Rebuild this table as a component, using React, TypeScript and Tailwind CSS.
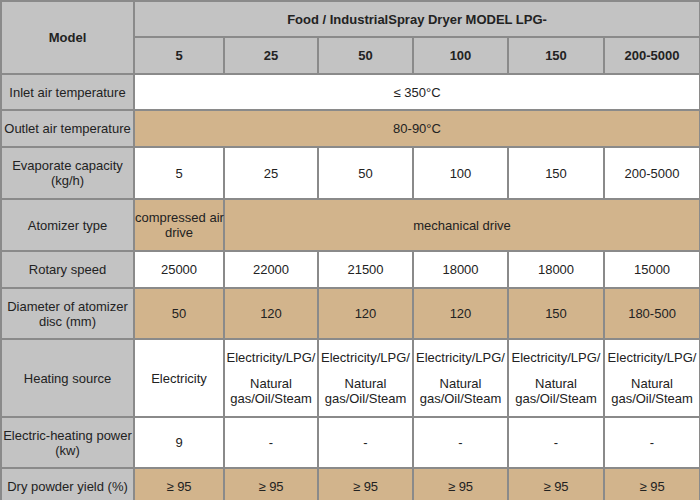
const sizes = ['5', '25', '50', '100', '150', '200-5000'];

type Row = {
  label: React.ReactNode;
  tan: boolean;
  h: string;
  cells: React.ReactNode[];
  span?: boolean;
};

const heat = (
  <div className="leading-[15px]">
    <div>Electricity/LPG/</div>
    <div className="h-[11px]" />
    <div>Natural</div>
    <div>gas/Oil/Steam</div>
  </div>
);

const rows: Row[] = [
  { label: 'Inlet air temperature', tan: false, h: 'h-[36px]', cells: ['≤ 350°C'], span: true },
  { label: 'Outlet air temperature', tan: true, h: 'h-[37px]', cells: ['80-90°C'], span: true },
  {
    label: (
      <>
        Evaporate capacity
        <br />
        (kg/h)
      </>
    ),
    tan: false,
    h: 'h-[52px]',
    cells: sizes
  },
  { label: 'Rotary speed', tan: false, h: 'h-[37px]', cells: ['25000', '22000', '21500', '18000', '18000', '15000'] },
  {
    label: (
      <>
        Diameter of atomizer
        <br />
        disc (mm)
      </>
    ),
    tan: true,
    h: 'h-[51px]',
    cells: ['50', '120', '120', '120', '150', '180-500']
  },
  { label: 'Heating source', tan: false, h: 'h-[78px]', cells: ['Electricity', heat, heat, heat, heat, heat] },
  {
    label: (
      <>
        Electric-heating power
        <br />
        (kw)
      </>
    ),
    tan: false,
    h: 'h-[51px]',
    cells: ['9', '-', '-', '-', '-', '-']
  },
  { label: 'Dry powder yield (%)', tan: true, h: 'h-[36px]', cells: ['≥ 95', '≥ 95', '≥ 95', '≥ 95', '≥ 95', '≥ 95'] }
];

const cell = 'border-2 border-[#8a8a8a] text-center align-middle p-0';
const label = `${cell} bg-[#c3c3c3]`;

function DataRow({ row }: { row: Row }): JSX.Element {
  const bg = row.tan ? 'bg-[#d2b48c]' : 'bg-white';
  return (
    <tr className={row.h}>
      <td className={label}>{row.label}</td>
      {row.span ? (
        <td className={`${cell} ${bg}`} colSpan={6}>
          {row.cells[0]}
        </td>
      ) : (
        row.cells.map((c, i) => (
          <td key={i} className={`${cell} ${bg}`}>
            {c}
          </td>
        ))
      )}
    </tr>
  );
}

export default function App(): JSX.Element {
  return (
    <div className="w-[700px] h-[500px] overflow-hidden bg-white font-['Liberation_Sans',Arial,sans-serif] text-[13px] leading-[15px] text-[#222]">
      <table className="w-[699px] table-fixed border-collapse">
        <colgroup>
          <col className="w-[133px]" />
          <col className="w-[90px]" />
          <col className="w-[94px]" />
          <col className="w-[95px]" />
          <col className="w-[95px]" />
          <col className="w-[96px]" />
          <col className="w-[96px]" />
        </colgroup>
        <tbody>
          <tr className="h-[36px]">
            <td className={`${label} font-bold`} rowSpan={2}>
              Model
            </td>
            <td className={`${label} font-bold`} colSpan={6}>
              Food / IndustrialSpray Dryer MODEL LPG-
            </td>
          </tr>
          <tr className="h-[37px]">
            {sizes.map((s) => (
              <td key={s} className={`${label} font-bold`}>
                {s}
              </td>
            ))}
          </tr>
          {rows.slice(0, 3).map((r, i) => (
            <DataRow key={i} row={r} />
          ))}
          <tr className="h-[52px]">
            <td className={label}>Atomizer type</td>
            <td className={`${cell} bg-[#d2b48c] whitespace-nowrap`}>
              compressed air
              <br />
              drive
            </td>
            <td className={`${cell} bg-[#d2b48c]`} colSpan={5}>
              mechanical drive
            </td>
          </tr>
          {rows.slice(3).map((r, i) => (
            <DataRow key={i} row={r} />
          ))}
        </tbody>
      </table>
    </div>
  );
}
